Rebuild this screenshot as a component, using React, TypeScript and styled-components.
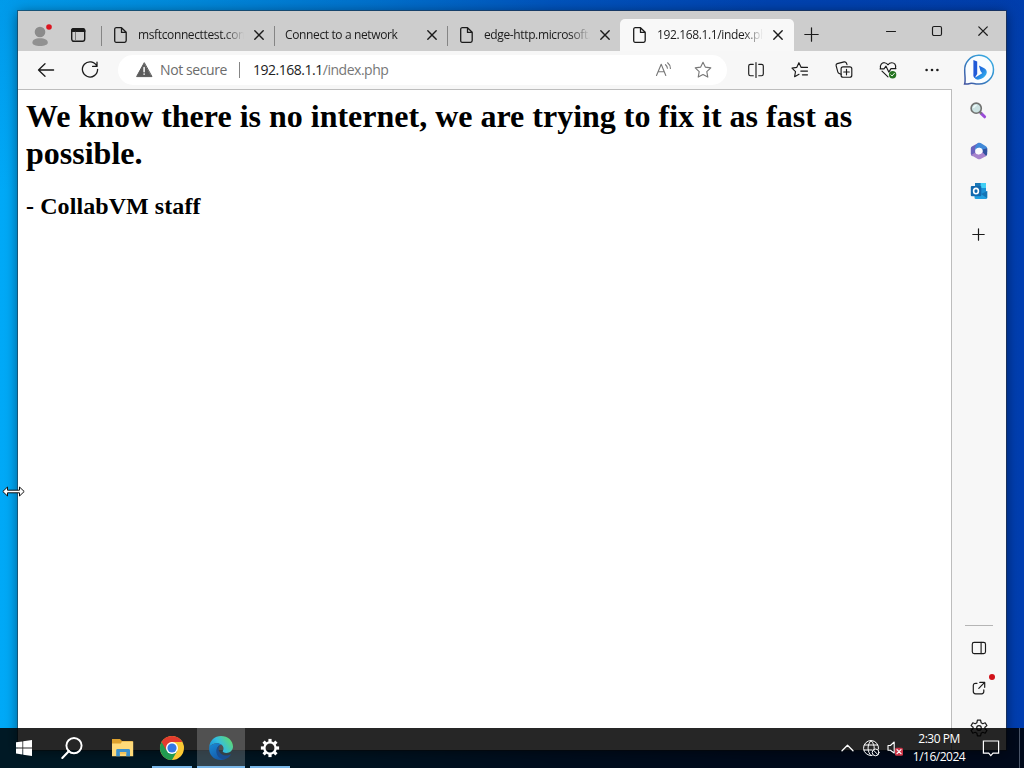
import React from 'react';
import styled, { createGlobalStyle } from 'styled-components';

const GlobalStyle = createGlobalStyle`
  html, body {
    margin: 0;
    padding: 0;
    overflow: hidden;
  }

  * {
    box-sizing: border-box;
  }

  svg {
    display: block;
    flex: none;
    overflow: visible;
  }
`;

const Desktop = styled.div`
  position: relative;
  width: 1024px;
  height: 768px;
  padding: 11px 18px 18px;
  overflow: hidden;
  font-family: 'Open Sans', 'Noto Sans', sans-serif;
  background:
    linear-gradient(180deg, rgba(0, 60, 150, 0.14), rgba(0, 60, 150, 0) 25%),
    linear-gradient(90deg, #00aaf8 0%, #0096e6 18%, #007ad6 36%, #0057c2 54%, #0044b4 75%, #003eb0 100%);
`;

const BrowserWindow = styled.div`
  display: flex;
  flex-direction: column;
  height: 739px;
  background: #f7f7f7;
  box-shadow: 0 0 0 1px rgba(40, 50, 60, 0.55), 0 2px 12px rgba(0, 0, 0, 0.5);
`;

const TitleBar = styled.div`
  display: flex;
  height: 40px;
  background: #cdcdcd;
`;

const TitleTools = styled.div`
  display: flex;
  gap: 20px;
  width: 83px;
  padding: 13px 0 0 13px;
`;

const TabItem = styled.div<{ $active?: boolean }>`
  position: relative;
  display: flex;
  align-items: center;
  width: ${(props) => (props.$active ? '174px' : '173px')};
  height: ${(props) => (props.$active ? '32px' : '40px')};
  margin-top: ${(props) => (props.$active ? '8px' : '0')};
  padding: ${(props) => (props.$active ? '0 11px 0 13px' : '8px 10px 0 13px')};
  border-radius: ${(props) => (props.$active ? '5px 5px 0 0' : '0')};
  background: ${(props) => (props.$active ? '#f8f8f8' : 'transparent')};

  &::before {
    content: '';
    position: absolute;
    display: ${(props) => (props.$active ? 'none' : 'block')};
    left: 0;
    top: 15px;
    width: 1px;
    height: 20px;
    background: #858585;
  }
`;

const TabTitle = styled.div<{ $indent: number }>`
  flex: 1;
  margin: 0 10px 0 ${(props) => props.$indent}px;
  overflow: hidden;
  white-space: nowrap;
  font-size: 12px;
  line-height: 18px;
  letter-spacing: -0.37px;
  color: #1c1c1c;
  mask-image: linear-gradient(90deg, #000 calc(100% - 20px), transparent);
`;

const NewTab = styled.div`
  flex: 1;
  padding: 16px 0 0 10px;
`;

const WindowButtons = styled.div`
  display: flex;

  svg {
    margin: 15px 18px;
  }
`;

const Body = styled.div`
  display: flex;
  flex: 1;
  min-height: 0;
`;

const MainColumn = styled.div`
  display: flex;
  flex-direction: column;
  width: 934px;
`;

const Toolbar = styled.div`
  display: flex;
  align-items: center;
  height: 38px;
  padding-left: 18px;
`;

const NavButtons = styled.div`
  display: flex;
  gap: 24px;
  width: 82px;
`;

const AddressBar = styled.div`
  display: flex;
  align-items: center;
  width: 609px;
  height: 30px;
  padding: 0 14px 0 18px;
  border-radius: 15px;
  background: #fff;
  font-size: 14px;
  line-height: 20px;
  color: #222;
`;

const Security = styled.span`
  width: 79px;
  margin-left: 7px;
  padding-bottom: 1px;
  letter-spacing: -0.4px;
  white-space: nowrap;
  color: #6c6c6c;
`;

const Divider = styled.i`
  width: 1px;
  height: 16px;
  margin-right: 13px;
  background: #858585;
`;

const Url = styled.span`
  flex: 1;
  padding-bottom: 1px;
  letter-spacing: -0.48px;

  em {
    font-style: normal;
    color: #777;
  }
`;

const AddressActions = styled.div`
  display: flex;
  gap: 20px;
`;

const ToolbarActions = styled.div`
  display: flex;
  gap: 24px;
  margin-left: 19px;
`;

const Page = styled.div`
  flex: 1;
  padding: 8px;
  background: #fff;
  border-top: 1px solid #bdbdbd;
  border-right: 1px solid #bdbdbd;
  font-family: 'Liberation Serif', 'Times New Roman', serif;
  color: #000;

  h1 {
    margin: 0 0 21px;
    font-size: 32px;
    line-height: 37px;
  }

  h2 {
    margin: 0;
    font-size: 24px;
    line-height: 27px;
    letter-spacing: 0.08px;
  }
`;

const Sidebar = styled.div`
  display: flex;
  flex-direction: column;
  justify-content: space-between;
  width: 54px;
  background: #f7f7f7;
`;

const SidebarGroup = styled.div<{ $bottom?: boolean }>`
  display: flex;
  flex-direction: column;
  align-items: center;
  height: ${(props) => (props.$bottom ? '125px' : 'auto')};

  hr {
    flex: none;
    width: 28px;
    height: 1px;
    margin: 0 0 2px;
    border: 0;
    background: #b5b5b5;
  }
`;

const SidebarButton = styled.div`
  position: relative;
  display: flex;
  flex: none;
  align-items: center;
  justify-content: center;
  width: 54px;
  height: 40px;
`;

const AddButton = styled(SidebarButton)`
  height: 46px;
  padding: 1px 1px 0 0;
`;

const Badge = styled.i`
  position: absolute;
  top: 6px;
  right: 11px;
  width: 6px;
  height: 6px;
  border-radius: 50%;
  background: #d11119;
`;

const Taskbar = styled.div`
  position: absolute;
  left: 0;
  right: 0;
  bottom: 0;
  display: flex;
  height: 40px;
  background: rgba(0, 0, 0, 0.85);
`;

const TaskButton = styled.div<{ $running?: boolean; $active?: boolean }>`
  display: flex;
  align-items: center;
  justify-content: center;
  width: 48px;
  height: 40px;
  margin-right: 1px;
  background: ${(props) => (props.$active ? 'rgba(255, 255, 255, 0.2)' : 'transparent')};
  background-image: ${(props) => (props.$running ? 'linear-gradient(#7ab8ea, #7ab8ea)' : 'none')};
  background-repeat: no-repeat;
  background-position: center bottom;
  background-size: ${(props) => (props.$active ? '48px' : '40px')} 2px;
`;

const StartGroup = styled.div`
  display: flex;
  width: 99px;

  ${TaskButton} {
    margin: 0;
  }
`;

const Tray = styled.div`
  display: flex;
  align-items: center;
  gap: 7px;
  margin-left: auto;
  color: #fff;
`;

const Clock = styled.div`
  width: 56px;
  margin-right: 8px;
  font-size: 12px;
  line-height: 18px;
  letter-spacing: -0.5px;
  text-align: center;
  white-space: nowrap;
`;

const ShowDesktop = styled.div`
  width: 5px;
  height: 40px;
  margin-left: 12px;
  border-left: 1px solid #4a5568;
`;

const Cursor = styled.svg`
  position: absolute;
  left: 2px;
  top: 486px;
`;

interface IconProps {
  w: number;
  h?: number;
  color?: string;
  stroke?: number;
  children: React.ReactNode;
}

const Icon: React.FC<IconProps> = ({ w, h = w, color = '#1b1b1b', stroke = 1.15, children }) => (
  <svg width={w} height={h} viewBox={`0 0 ${w} ${h}`} fill="none" stroke={color} strokeWidth={stroke} strokeLinecap="round" strokeLinejoin="round">
    {children}
  </svg>
);

const ProfileIcon = () => (
  <Icon w={20} h={24} stroke={0}>
    <circle cx="9" cy="8" r="5.3" fill="#8b8b8b" />
    <path d="M1.4 18.8C1.4 15.8 4 14.3 9 14.3S16.8 15.8 16.8 18.8C16.8 20.8 13.5 22 9 22S1.4 20.8 1.4 18.8Z" fill="#919191" />
    <circle cx="18" cy="3" r="2.8" fill="#dc1520" />
  </Icon>
);

const WorkspaceIcon = () => (
  <Icon w={16} h={24} stroke={1.4}>
    <rect x="0.7" y="4.8" width="13" height="12.5" rx="2.2" />
    <path d="M.7 7.4V6.8Q.7 4.8 2.7 4.8H11.7Q13.7 4.8 13.7 6.8V7.4Z" fill="#1b1b1b" />
    <path d="M4.5 8.2V16.5" stroke="#777" strokeWidth="1" />
  </Icon>
);

const DocumentIcon = () => (
  <Icon w={13} h={16} stroke={1.3}>
    <path d="M2.2.7H7.5L12.2 5.3V13.6Q12.2 15.3 10.6 15.3H2.3Q.7 15.3.7 13.6V2.3Q.7.7 2.3.7ZM7.5.9V5.4H12" />
  </Icon>
);

const CloseIcon = ({ size = 10 }: { size?: number }) => (
  <Icon w={size} stroke={size === 10 ? 1.4 : 1.2}>
    <path d={`M.8.8L${size - 0.8} ${size - 0.8}M${size - 0.8}.8L.8 ${size - 0.8}`} />
  </Icon>
);

const PlusIcon = ({ size = 14 }: { size?: number }) => (
  <Icon w={size + 1} stroke={1.2}>
    <path d={`M${size / 2 + 0.5}.8V${size + 0.2}M.8 ${size / 2 + 0.5}H${size + 0.2}`} />
  </Icon>
);

const BackIcon = () => (
  <Icon w={20} stroke={1.3}>
    <path d="M17.6 10H2.5M9 3.7L2.5 10L9 16.3" />
  </Icon>
);

const RefreshIcon = () => (
  <Icon w={20} stroke={1.3}>
    <path d="M16.8 6A7.6 7.6 0 1 0 17.6 9.3M17 2.2V6.4H12.6" />
  </Icon>
);

const WarningIcon = () => (
  <Icon w={17} h={16} stroke={1} color="#5c5c5c">
    <path d="M8.1 1L.6 14.6H15.6Z" fill="#5c5c5c" />
    <path d="M8.1 5.5V9.7M8.1 12V12.2" stroke="#fff" strokeWidth="1.5" />
  </Icon>
);

const ReadAloudIcon = () => (
  <Icon w={20} color="#777" stroke={1.1}>
    <path d="M3.5 15.5L8.2 4.2L12.8 15.5M5.1 11.7H11.2M12.5 4.7Q14.3 6.1 14.4 8.3M14.6 2.8Q17.3 4.9 17.4 8.4" />
  </Icon>
);

const StarIcon = () => (
  <Icon w={20} color="#777" stroke={1.1}>
    <path d="M10 2.2L12.3 7.1L17.8 7.9L13.8 11.7L14.8 17.1L10 14.5L5.2 17.1L6.2 11.7L2.2 7.9L7.7 7.1Z" />
  </Icon>
);

const SplitIcon = () => (
  <Icon w={20}>
    <path d="M7.3 4.3H4.4Q2.7 4.3 2.7 6V14Q2.7 15.7 4.4 15.7H7.3M12.7 4.3H15.6Q17.3 4.3 17.3 6V14Q17.3 15.7 15.6 15.7H12.7M10 2.5V17.5" />
  </Icon>
);

const FavoritesIcon = () => (
  <Icon w={20}>
    <path d="M12.2 7.4H11.2L8.9 2.7L6.7 7.4L2 8.1L5.5 11.6L4.6 16.7L9 14.3M12.4 7.4H17.5M10.8 11.1H17.5M12.4 14.8H17.5" />
  </Icon>
);

const CollectionsIcon = () => (
  <Icon w={20}>
    <path d="M7.2 14.3L5.2 13.4Q4.1 12.9 3.8 11.8L2.1 5.6Q1.8 4.1 3.2 3.6L10.1 1.9Q11.8 1.6 12.4 3L13 4.6" />
    <rect x="7.1" y="6.8" width="10.7" height="10.4" rx="2" />
    <path d="M12.5 9.2V14.8M9.7 12H15.3" />
  </Icon>
);

const HealthIcon = () => (
  <Icon w={20}>
    <path d="M2.5 8.2C1.8 4.7 4 2.6 6.4 2.7Q8.8 2.8 10 4.8Q11.4 2.7 13.8 2.7C16.4 2.7 18.3 4.9 17.5 8.2M4 11.1L10 16.9M2 8.8H6L8 6.2L10.8 12.1L13 8.6H18" />
    <circle cx="14.6" cy="14.7" r="3.7" fill="#267321" stroke="none" />
    <path d="M12.8 14.8L14.1 16L16.4 13.3" stroke="#e5f4e3" strokeWidth="1" />
  </Icon>
);

const MoreIcon = () => (
  <Icon w={20}>
    <g fill="#1b1b1b" stroke="none">
      <circle cx="4.6" cy="10" r="1.3" />
      <circle cx="10" cy="10" r="1.3" />
      <circle cx="15.4" cy="10" r="1.3" />
    </g>
  </Icon>
);

const BingIcon = () => (
  <svg width="32" height="34" viewBox="0 0 32 34">
    <defs>
      <linearGradient id="bubble" x1="0" y1="1" x2="1" y2="0">
        <stop offset="0" stopColor="#41529f" />
        <stop offset="0.5" stopColor="#3388c9" />
        <stop offset="1" stopColor="#3cb4e8" />
      </linearGradient>
      <linearGradient id="bing" x1="0" y1="0" x2="1" y2="1">
        <stop offset="0" stopColor="#1b54df" />
        <stop offset="0.45" stopColor="#2376df" />
        <stop offset="1" stopColor="#36c8f4" />
      </linearGradient>
    </defs>
    <path d="M1.6 30C2.8 26.5 1.7 21.7 1.7 16.4A14.4 14.4 0 1 1 16.1 30.1C11 30.4 9.5 28.3 6.8 29.5Q4.5 30.3 1.6 30Z" fill="#fafdff" stroke="url(#bubble)" strokeWidth="1.5" />
    <path d="M10.4 6L14.2 7.6V20L11.7 24Q10.4 23.2 10.4 21.4Z" fill="#2059d7" />
    <path d="M15.9 11.6L21.3 14.2Q25 16.6 23.2 20.6Q21 24.4 16 25.6Q12.3 26.3 11.2 23Q12.6 23.5 14.3 22.3L19.2 19.3L17.5 17Z" fill="url(#bing)" />
  </svg>
);

const SearchColorIcon = () => (
  <svg width="20" height="20" viewBox="0 0 20 20">
    <path d="M11.9 12.1L15.6 15.8" stroke="#9a4bd8" strokeWidth="3" strokeLinecap="round" />
    <path d="M10.6 10.8L12.6 12.7" stroke="#777" strokeWidth="2" />
    <circle cx="7.2" cy="7.2" r="5.1" fill="#cbe2e2" stroke="#70716f" strokeWidth="1.6" />
    <path d="M4.5 7Q5 4.7 7.6 4.3" fill="none" stroke="#eefafa" strokeWidth="1.4" />
  </svg>
);

const OfficeIcon = () => (
  <svg width="18" height="18" viewBox="0 0 18 18">
    <path d="M8.7.7L1.9 4.5Q.8 5.2.8 6.6V12.1Q.9 13.7 2.4 14.3L5.2 13V7Q5.4 5.2 7.2 4.3L11.2 2.1Z" fill="#6a62bd" />
    <path d="M8.1.9Q9.4.3 10.7 1.1L15.9 4.2Q17.2 5 17.2 6.5V10.1L12.2 7.4Q11.2 5.6 9 5.7L5.3 7.7Q4.5 3.5 8.1.9Z" fill="#4189d8" />
    <path d="M17.2 6.2V12Q17.2 13.6 15.8 14.3L12 11.9Q13.2 10.6 12.5 7.6Z" fill="#31519f" />
    <path d="M1 12.9L5.2 10.8Q6.4 12.7 9 12.4L12.6 10.2L16.2 13.9L10.6 17Q9.2 17.7 7.8 16.9Z" fill="#a783cd" />
    <circle cx="9" cy="9" r="3.3" fill="#fafaff" />
  </svg>
);

const OutlookIcon = () => (
  <svg width="18" height="18" viewBox="0 0 18 18">
    <path d="M5 1H16V12H5Z" fill="#1b91d5" />
    <path d="M10.5 1H16V6H10.5Z" fill="#41cff5" />
    <path d="M5 1H10.5V6H5Z" fill="#1a78b7" />
    <path d="M4.5 9.2L11 12L17.2 9V15.5Q17.2 17 15.8 17H6Q4.5 17 4.5 15.5Z" fill="#209fe0" />
    <path d="M11 12L17.2 9V16.2Z" fill="#1374b5" />
    <rect x="0.8" y="4" width="10.5" height="10.3" rx="1" fill="#1269ae" />
    <ellipse cx="6" cy="9.1" rx="2.4" ry="2.7" fill="none" stroke="#fff" strokeWidth="1.6" />
  </svg>
);

const PanelIcon = () => (
  <Icon w={16}>
    <rect x="1.3" y="2.4" width="13.2" height="11.2" rx="1.8" />
    <path d="M10.1 2.4V13.6" />
  </Icon>
);

const OpenIcon = () => (
  <Icon w={16} stroke={1.2}>
    <path d="M6 3.3H4.6Q2.3 3.3 2.3 5.6V11.6Q2.3 13.8 4.6 13.8H10.6Q12.8 13.8 12.8 11.6V9.9M8.8 2.4H13.7V7.3M13.4 2.7L7.8 8.4" />
  </Icon>
);

const GearIcon = () => (
  <Icon w={18} stroke={1.2}>
    <path d="M7.4 1.2H10.6L11.1 3.7L12.8 4.7L15.2 3.8L16.9 6.6L14.9 8.3V9.7L16.9 11.4L15.2 14.2L12.8 13.3L11.1 14.3L10.6 16.8H7.4L6.9 14.3L5.2 13.3L2.8 14.2L1.1 11.4L3.1 9.7V8.3L1.1 6.6L2.8 3.8L5.2 4.7L6.9 3.7Z" />
    <circle cx="9" cy="9" r="2.3" />
  </Icon>
);

const WindowsIcon = () => (
  <svg width="16" height="16" viewBox="0 0 16 16" fill="#fff">
    <path d="M0 2.3L6.4 1.4V7.5H0ZM7.2 1.2L16 0V7.5H7.2ZM0 8.4H6.4V14.5L0 13.6ZM7.2 8.4H16V16L7.2 14.7Z" />
  </svg>
);

const TaskSearchIcon = () => (
  <Icon w={22} color="#fff" stroke={1.9}>
    <circle cx="13" cy="8.6" r="7.6" />
    <path d="M8 14.1L1.3 21" strokeWidth="2.1" />
  </Icon>
);

const FolderIcon = () => (
  <svg width="22" height="20" viewBox="0 0 22 20">
    <path d="M0 1H8L10 3H20.7V18H0Z" fill="#dda12e" />
    <path d="M0 5.4H8.8L10 3.5H21.2V18.2H0Z" fill="#ffda79" />
    <path d="M4.2 18.2V12.3Q4.2 11 5.5 11H16.6Q18 11 18 12.3V18.2H14.2V14H7.9V18.2Z" fill="#3c91cc" />
    <path d="M7.9 14H14.2V16.2H7.9Z" fill="#efc35d" />
  </svg>
);

const ChromeIcon = () => (
  <svg width="24" height="24" viewBox="0 0 24 24">
    <circle cx="12" cy="12" r="12" fill="#fcc934" />
    <path d="M12 12L1.6 6A12 12 0 0 0 12 24L17.2 15Z" fill="#219b50" />
    <path d="M1.6 6A12 12 0 0 1 22.4 6H12Q7.8 6 6.6 14.7Z" fill="#e33b2e" />
    <circle cx="12" cy="12" r="6" fill="#fff" />
    <circle cx="12" cy="12" r="4.6" fill="#3478e5" />
  </svg>
);

const EdgeIcon = () => (
  <svg width="24" height="24" viewBox="0 0 24 24">
    <defs>
      <linearGradient id="wave" x1="0" y1="0.7" x2="1" y2="0.2">
        <stop offset="0" stopColor="#168fd8" />
        <stop offset="0.45" stopColor="#34bee0" />
        <stop offset="1" stopColor="#64dc65" />
      </linearGradient>
      <linearGradient id="deep" x1="0" y1="0" x2="0.6" y2="1">
        <stop offset="0" stopColor="#198bd6" />
        <stop offset="1" stopColor="#1459a9" />
      </linearGradient>
    </defs>
    <path d="M.2 11.2C.8 4.7 5.7.1 12 .1C18.9.1 24 4.8 24 10.6C24 14.7 20.8 17 17.5 17C14.8 17 13.4 16.1 13.8 15.1C15.4 12.9 14.5 10.4 12.6 8.8C8.7 5.7 3.2 7.2.2 11.2Z" fill="url(#wave)" />
    <path d="M.2 11.2C2.2 7.8 9 5.5 12.6 8.8Q9.7 8.5 8.5 11.3C6.4 16.4 9.6 21.4 15.6 23.3C7.2 26.1-.8 19.8.2 11.2Z" fill="url(#deep)" />
    <path d="M12.2 8.7C9.3 10.3 9.1 13.4 10.4 15.8C13 20.4 18.1 20.3 22.3 18Q20.1 22.1 15.6 23.4C9.5 23.5 5.7 17.2 8 12Q9.3 9 12.2 8.7Z" fill="#194d91" />
  </svg>
);

const TaskGearIcon = () => (
  <svg width="20" height="20" viewBox="0 0 20 20" fill="none" stroke="#fff">
    <circle cx="10" cy="10" r="5.6" strokeWidth="2.3" />
    {[0, 45, 90, 135, 180, 225, 270, 315].map((angle) => (
      <path key={angle} d="M10 4V.9" strokeWidth="3.2" transform={`rotate(${angle} 10 10)`} />
    ))}
  </svg>
);

const GlobeIcon = () => (
  <Icon w={17} color="#fff" stroke={1}>
    <path d="M9.1 15.5A7.5 7.5 0 1 1 15.5 9M8 .7C4 4.3 4 11.8 8 15.5M8 .7C10.5 3 11.4 5.7 11.2 8.5M1.4 5H14.7M1 10H8.8" />
    <circle cx="12.6" cy="12.4" r="3.4" />
    <path d="M10.4 10.1L14.9 14.7" />
  </Icon>
);

const SpeakerIcon = () => (
  <Icon w={17} color="#fff" stroke={1.1}>
    <path d="M1 5.5H3.4L7.2 2V13L3.4 10.2H1Z" />
    <rect x="8" y="7.7" width="8" height="8" rx="1.5" fill="#cb3447" stroke="none" />
    <path d="M10 9.7L14 13.7M14 9.7L10 13.7" strokeWidth="1.2" />
  </Icon>
);

interface TabProps {
  title: string;
  icon?: boolean;
  active?: boolean;
}

const Tab: React.FC<TabProps> = ({ title, icon = true, active }) => (
  <TabItem $active={active}>
    {icon && <DocumentIcon />}
    <TabTitle $indent={icon ? 11 : -2}>{title}</TabTitle>
    <CloseIcon />
  </TabItem>
);

const App: React.FC = () => {
  return (
    <>
      <GlobalStyle />
      <Desktop>
        <BrowserWindow>
          <TitleBar>
            <TitleTools>
              <ProfileIcon />
              <WorkspaceIcon />
            </TitleTools>
            <Tab title="msftconnecttest.com" />
            <Tab title="Connect to a network" icon={false} />
            <Tab title="edge-http.microsoft.com" />
            <Tab title="192.168.1.1/index.php" active />
            <NewTab><PlusIcon /></NewTab>
            <WindowButtons>
              <Icon w={10}><path d="M.5 5.5H9.5" /></Icon>
              <Icon w={10}><rect x="0.5" y="0.5" width="9" height="9" rx="1.5" /></Icon>
              <CloseIcon size={10.1} />
            </WindowButtons>
          </TitleBar>
          <Body>
            <MainColumn>
              <Toolbar>
                <NavButtons>
                  <BackIcon />
                  <RefreshIcon />
                </NavButtons>
                <AddressBar>
                  <WarningIcon />
                  <Security>Not secure</Security>
                  <Divider />
                  <Url>192.168.1.1<em>/index.php</em></Url>
                  <AddressActions>
                    <ReadAloudIcon />
                    <StarIcon />
                  </AddressActions>
                </AddressBar>
                <ToolbarActions>
                  <SplitIcon />
                  <FavoritesIcon />
                  <CollectionsIcon />
                  <HealthIcon />
                  <MoreIcon />
                </ToolbarActions>
              </Toolbar>
              <Page>
                <h1>We know there is no internet, we are trying to fix it as fast as possible.</h1>
                <h2>- CollabVM staff</h2>
              </Page>
            </MainColumn>
            <Sidebar>
              <SidebarGroup>
                <SidebarButton><BingIcon /></SidebarButton>
                <SidebarButton><SearchColorIcon /></SidebarButton>
                <SidebarButton><OfficeIcon /></SidebarButton>
                <SidebarButton><OutlookIcon /></SidebarButton>
                <AddButton><PlusIcon size={12} /></AddButton>
              </SidebarGroup>
              <SidebarGroup $bottom>
                <hr />
                <SidebarButton><PanelIcon /></SidebarButton>
                <SidebarButton><OpenIcon /><Badge /></SidebarButton>
                <SidebarButton><GearIcon /></SidebarButton>
              </SidebarGroup>
            </Sidebar>
          </Body>
        </BrowserWindow>

        <Taskbar>
          <StartGroup>
            <TaskButton><WindowsIcon /></TaskButton>
            <TaskButton><TaskSearchIcon /></TaskButton>
          </StartGroup>
          <TaskButton><FolderIcon /></TaskButton>
          <TaskButton $running><ChromeIcon /></TaskButton>
          <TaskButton $running $active><EdgeIcon /></TaskButton>
          <TaskButton $running><TaskGearIcon /></TaskButton>
          <Tray>
            <Icon w={15} h={8} color="#fff" stroke={1.3}><path d="M1 6.8L6.5 1.3L12 6.8" /></Icon>
            <GlobeIcon />
            <SpeakerIcon />
            <Clock>2:30 PM<br />1/16/2024</Clock>
            <Icon w={18} color="#fff" stroke={1.2}>
              <path d="M1.4 2H16.6V14.2H11L8.8 16.7L6.7 14.2H1.4Z" strokeLinejoin="miter" />
            </Icon>
            <ShowDesktop />
          </Tray>
        </Taskbar>

        <Cursor width="23" height="11" viewBox="0 0 23 11">
          <path d="M.8 5.5L5.5 1V4.2H17.5V1L22.2 5.5L17.5 10V6.8H5.5V10Z" fill="#fff" stroke="#111" strokeWidth="1" />
        </Cursor>
      </Desktop>
    </>
  );
};

export default App;
